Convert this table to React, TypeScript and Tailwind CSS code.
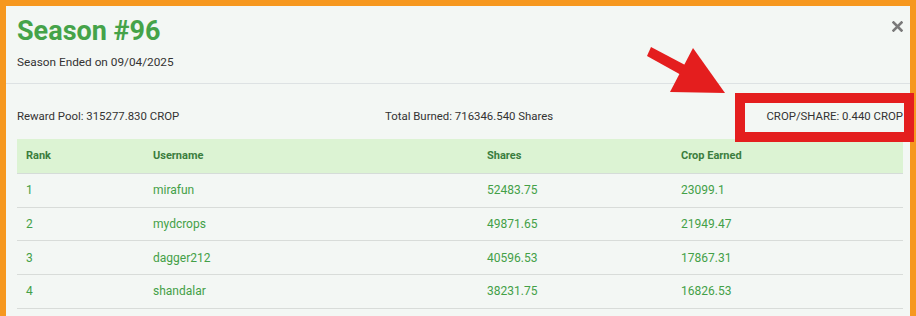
const rows = [
  { rank: 1, user: 'mirafun', shares: '52483.75', crop: '23099.1' },
  { rank: 2, user: 'mydcrops', shares: '49871.65', crop: '21949.47' },
  { rank: 3, user: 'dagger212', shares: '40596.53', crop: '17867.31' },
  { rank: 4, user: 'shandalar', shares: '38231.75', crop: '16826.53' },
];

function CloseIcon() {
  return (
    <svg width="11" height="11" viewBox="0 0 11 11" className="block">
      <path d="M1.5 1.5 L9.5 9.5 M9.5 1.5 L1.5 9.5" stroke="#7a7a7a" strokeWidth="2.6" strokeLinecap="square" />
    </svg>
  );
}

function Arrow() {
  return (
    <svg width="90" height="60" viewBox="0 0 90 60" className="absolute left-[643px] top-[42px]">
      <polygon points="8,5 4,14 40,34 44,24" fill="#e41e1e" />
      <polygon points="50,6 27,50 82,51" fill="#e41e1e" />
    </svg>
  );
}

export default function App() {
  return (
    <div className="relative w-[916px] h-[316px] bg-[#f6981f] pt-[6px] pl-[6px] font-['Roboto',sans-serif] overflow-hidden">
      <div className="relative w-[904px] h-[310px] bg-[#f3f7f4] overflow-hidden">
        <div className="h-[78px] border-b border-[#dde2e3] pl-[11px] pt-[9px] relative">
          <h1 className="text-[27px] leading-[32px] font-bold text-[#45a349]">Season #96</h1>
          <p className="mt-[7px] text-[11.8px] leading-[16px] text-[#333]">Season Ended on 09/04/2025</p>
          <button className="absolute right-[7px] top-[15px]">
            <CloseIcon />
          </button>
        </div>

        <div className="flex items-center pt-[11px] h-[55px] pl-[11px] pr-[7px] text-[11.4px] text-[#333]">
          <div className="w-[368px]">Reward Pool: 315277.830 CROP</div>
          <div className="flex-1">Total Burned: 716346.540 Shares</div>
          <div>CROP/SHARE: 0.440 CROP</div>
        </div>

        <div className="ml-[11px] mr-[7px] text-[12px]">
          <div className="flex h-[35px] items-center bg-[#dcf3d3] border-b border-[#d5dcd8] text-[11px] font-bold text-[#3b7d3e]">
            <div className="w-[127px] pl-[9px]">Rank</div>
            <div className="w-[334px] pl-[9px]">Username</div>
            <div className="w-[194px] pl-[9px]">Shares</div>
            <div className="flex-1 pl-[9px]">Crop Earned</div>
          </div>
          {rows.map((r) => (
            <div key={r.rank} className="flex h-[33.7px] items-center border-b border-[#d8dcd9] text-[#43a047]">
              <div className="w-[127px] pl-[9px]">{r.rank}</div>
              <div className="w-[334px] pl-[9px]">{r.user}</div>
              <div className="w-[194px] pl-[9px]">{r.shares}</div>
              <div className="flex-1 pl-[9px]">{r.crop}</div>
            </div>
          ))}
        </div>
      </div>

      <Arrow />
      <div className="absolute left-[735px] top-[93px] w-[179px] h-[49px] border-[10px] border-[#e41e1e]" />
    </div>
  );
}
